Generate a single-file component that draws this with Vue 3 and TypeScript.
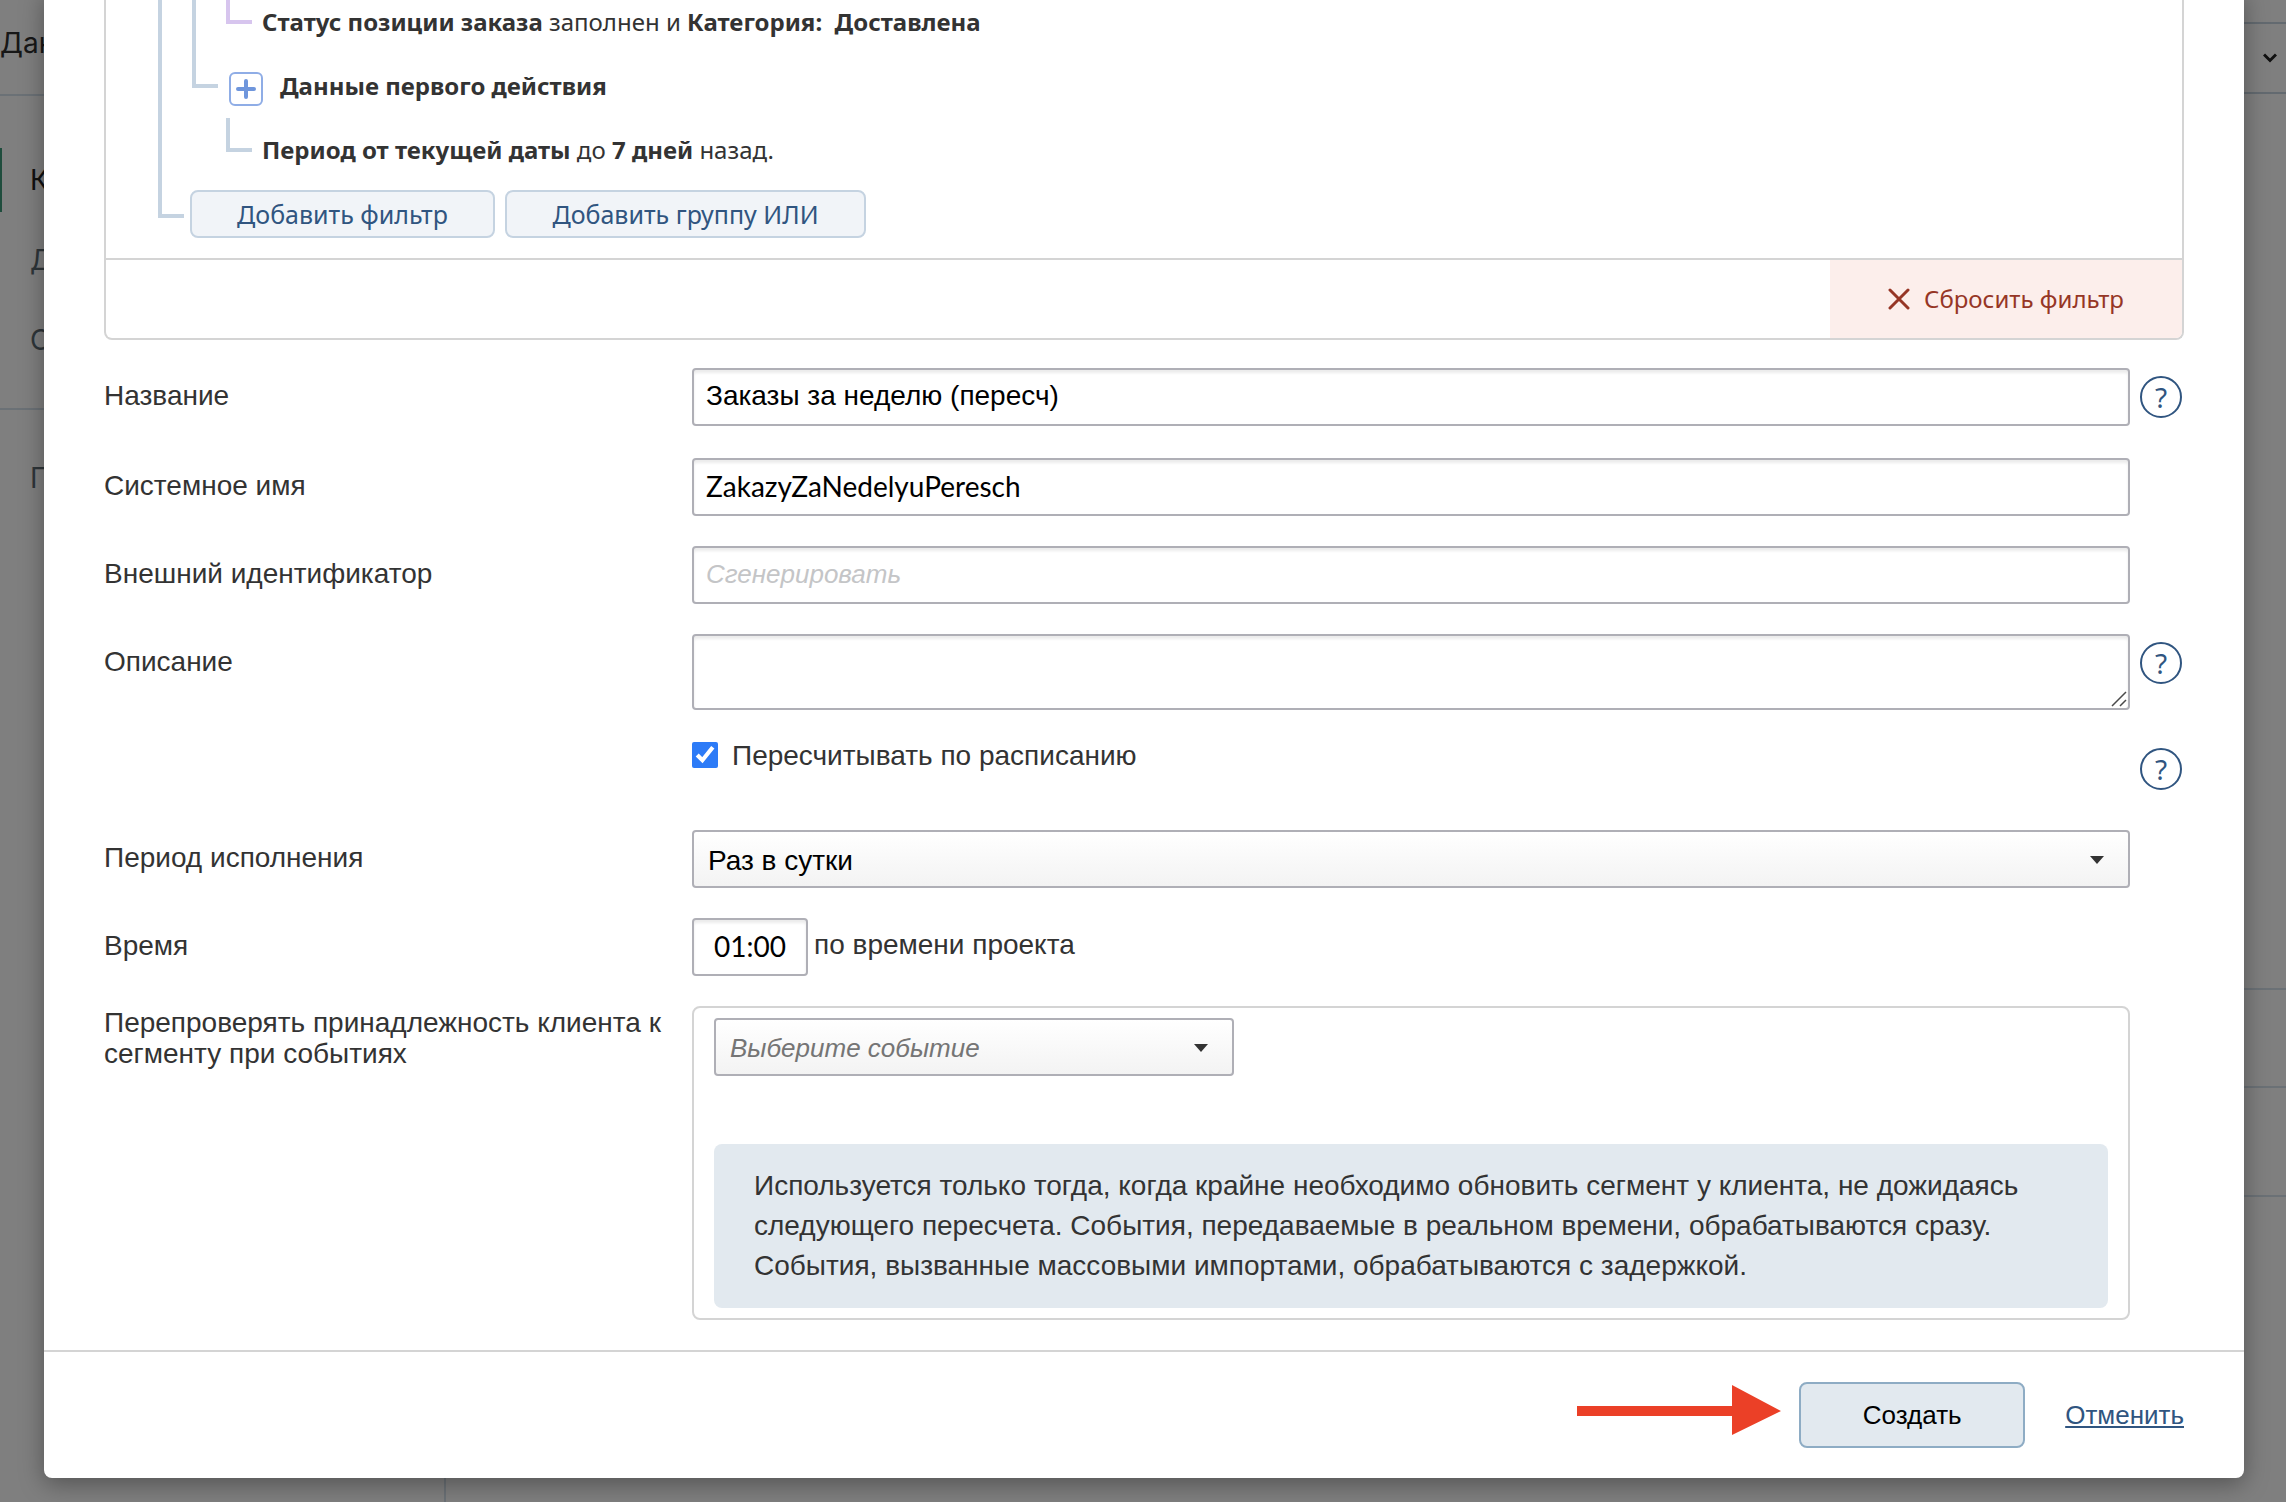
<script setup lang="ts">
import { ref } from 'vue'

interface NavItem {
  text: string
  active?: boolean
}

const nav: NavItem[] = [
  { text: 'К', active: true },
  { text: 'Д' },
  { text: 'С' },
]

const title = ref('Заказы за неделю (пересч)')
const systemName = ref('ZakazyZaNedelyuPeresch')
const externalId = ref('')
const description = ref('')
const scheduled = ref(true)
const period = ref('day')
const time = ref('01:00')
const event = ref('')
</script>

<template>
  <div class="screen">
    <div class="page">
      <aside class="side">
        <div class="side-title">Дан</div>
        <nav class="side-nav">
          <a
            v-for="item in nav"
            :key="item.text"
            href="#"
            class="side-link"
            :class="{ active: item.active }"
          >{{ item.text }}</a>
        </nav>
        <a href="#" class="side-link side-last">П</a>
      </aside>
      <div class="content">
        <div class="toolbar">
          <svg width="14" height="10" viewBox="0 0 14 10" fill="none" stroke="#222" stroke-width="3">
            <path d="M1 1.5 7 7.5 13 1.5" />
          </svg>
        </div>
        <div class="block block-tall"></div>
        <div class="block block-a"></div>
        <div class="block block-b"></div>
      </div>
    </div>

    <div class="overlay">
      <form class="modal" @submit.prevent>
        <section class="filter">
          <div class="tree">
            <div class="node">
              <span class="rail line"></span>
              <span class="rail line"></span>
              <span class="rail"><i class="corner violet"></i></span>
              <p class="cond"><b>Статус позиции заказа</b> заполнен и <b>Категория:&nbsp; Доставлена</b></p>
            </div>
            <div class="node">
              <span class="rail line"></span>
              <span class="rail"><i class="corner"></i></span>
              <button type="button" class="plus" aria-label="+">
                <svg width="20" height="20" viewBox="0 0 20 20" stroke="#6f96dc" stroke-width="4" stroke-linecap="round">
                  <path d="M10 2v16M2 10h16" />
                </svg>
              </button>
              <p class="cond"><b>Данные первого действия</b></p>
            </div>
            <div class="node">
              <span class="rail line"></span>
              <span class="rail"></span>
              <span class="rail"><i class="corner"></i></span>
              <p class="cond"><b>Период от текущей даты</b> до <b>7 дней</b> назад.</p>
            </div>
            <div class="node node-actions">
              <span class="rail"><i class="corner"></i></span>
              <div class="actions">
                <button type="button" class="add add-filter">Добавить фильтр</button>
                <button type="button" class="add add-group">Добавить группу ИЛИ</button>
              </div>
            </div>
          </div>
          <div class="filter-foot">
            <button type="button" class="reset">
              <svg width="22" height="22" viewBox="0 0 22 22" stroke="#963626" stroke-width="3" stroke-linecap="round">
                <path d="M2 2 20 20M20 2 2 20" />
              </svg>
              Сбросить фильтр
            </button>
          </div>
        </section>

        <div class="fields">
          <div class="row row-first">
            <label class="label" for="title">Название</label>
            <input id="title" v-model="title" class="input" type="text">
            <button type="button" class="help">?</button>
          </div>
          <div class="row">
            <label class="label" for="system">Системное имя</label>
            <input id="system" v-model="systemName" class="input latin" type="text">
          </div>
          <div class="row">
            <label class="label" for="external">Внешний идентификатор</label>
            <input id="external" v-model="externalId" class="input" type="text" placeholder="Сгенерировать">
          </div>
          <div class="row">
            <label class="label" for="description">Описание</label>
            <div class="area-wrap">
              <textarea id="description" v-model="description" class="input area"></textarea>
              <svg class="grip" width="16" height="16" viewBox="0 0 16 16" stroke="#4a4a4a" stroke-width="1.5">
                <path d="M1 15 15 1M9 15l6-6" />
              </svg>
            </div>
            <button type="button" class="help">?</button>
          </div>
          <div class="row row-check">
            <label class="check">
              <input v-model="scheduled" type="checkbox">
              Пересчитывать по расписанию
            </label>
            <button type="button" class="help">?</button>
          </div>
          <div class="row">
            <label class="label" for="period">Период исполнения</label>
            <div class="select">
              <select id="period" v-model="period">
                <option value="day">Раз в сутки</option>
              </select>
              <svg class="caret" width="14" height="8" viewBox="0 0 14 8" fill="#333"><path d="M0 0h14L7 8z" /></svg>
            </div>
          </div>
          <div class="row">
            <label class="label" for="time">Время</label>
            <div class="time">
              <input id="time" v-model="time" class="input latin time-input" type="text">
              <span>по времени проекта</span>
            </div>
          </div>
          <div class="row">
            <label class="label label-top" for="event">Перепроверять принадлежность клиента к сегменту при событиях</label>
            <div class="events">
              <div class="select select-event">
                <select id="event" v-model="event">
                  <option value="">Выберите событие</option>
                </select>
                <svg class="caret" width="14" height="8" viewBox="0 0 14 8" fill="#333"><path d="M0 0h14L7 8z" /></svg>
              </div>
              <p class="note">
                Используется только тогда, когда крайне необходимо обновить сегмент у клиента, не дожидаясь
                следующего пересчета. События, передаваемые в реальном времени, обрабатываются сразу.
                События, вызванные массовыми импортами, обрабатываются с задержкой.
              </p>
            </div>
          </div>
        </div>

        <footer class="foot">
          <svg class="arrow" width="204" height="66" viewBox="0 0 204 66" fill="#eb4027">
            <path d="M0 24H155V3L204 29 155 53V34H0z" />
          </svg>
          <button type="submit" class="submit">Создать</button>
          <a href="#" class="cancel">Отменить</a>
        </footer>
      </form>
    </div>
  </div>
</template>

<style>
body {
  margin: 0;
  background: #808080;
}
</style>

<style scoped>
* {
  box-sizing: border-box;
}

.screen {
  display: grid;
  overflow: hidden;
  font: 28px/31px "Liberation Sans", Arial, sans-serif;
  color: #333;
}

button,
input,
textarea,
select {
  margin: 0;
  font: inherit;
}

.page,
.overlay {
  grid-area: 1 / 1;
  min-width: 0;
}

/* page under the dialog */
.page {
  display: grid;
  grid-template-columns: 446px 1fr;
  background: #fff;
  font-family: Inter, sans-serif;
}

.side {
  border-right: 2px solid #d6e2ec;
}

.side-title {
  height: 96px;
  padding-top: 28px;
  border-bottom: 2px solid #d6e2ec;
  color: #2e2e2e;
}

.side-nav {
  display: grid;
  gap: 16px;
  padding: 52px 0 36px;
  border-bottom: 2px solid #d6e2ec;
}

.side-link {
  display: block;
  padding-left: 30px;
  line-height: 64px;
  color: #5d6b73;
  text-decoration: none;
}

.side-link.active {
  padding-left: 28px;
  border-left: 2px solid #3f9b7a;
  color: #222;
}

.side-last {
  margin-top: 36px;
}

.content {
  padding-top: 22px;
}

.toolbar {
  display: flex;
  align-items: center;
  justify-content: flex-end;
  height: 72px;
  padding-right: 9px;
  border: solid #c6d4e0;
  border-width: 2px 0;
}

.block {
  border-bottom: 2px solid #d6e2ec;
}

.block-tall {
  height: 896px;
}

.block-a {
  height: 98px;
}

.block-b {
  height: 109px;
}

/* dialog */
.overlay {
  padding: 0 42px 24px 44px;
  background: rgba(0, 0, 0, 0.5);
}

.modal {
  margin-top: -10px;
  border-radius: 0 0 8px 8px;
  background: #fff;
  box-shadow: 0 6px 24px rgba(0, 0, 0, 0.35);
}

.filter {
  margin: 0 60px;
  border: 2px solid #d4d4d4;
  border-top: 0;
  border-radius: 0 0 8px 8px;
  overflow: hidden;
  font: 24px/64px "Noto Sans", sans-serif;
}

.tree {
  padding-left: 52px;
  border-bottom: 2px solid #d4d4d4;
}

.node {
  display: flex;
  height: 64px;
}

.rail {
  width: 34px;
  flex: none;
}

.rail.line {
  border-left: 4px solid #c5d3e1;
}

.corner {
  display: block;
  width: 26px;
  height: 34px;
  border: solid #c5d3e1;
  border-width: 0 0 4px 4px;
}

.corner.violet {
  border-color: #d7c5ee;
}

.cond {
  margin: 0;
  padding-left: 2px;
  white-space: nowrap;
}

.plus {
  display: grid;
  place-items: center;
  width: 34px;
  height: 34px;
  margin: 18px 15px 0 3px;
  padding: 0;
  border: 2px solid #8fade6;
  border-radius: 6px;
  background: #fff;
}

.node-actions {
  height: 76px;
}

.node-actions .rail {
  width: 32px;
}

.node-actions .corner {
  height: 36px;
}

.actions {
  display: flex;
  gap: 10px;
  padding-top: 8px;
}

.add {
  height: 48px;
  padding: 0;
  border: 2px solid #c5d3e1;
  border-radius: 8px;
  background: #f1f4f8;
  color: #305580;
  font-size: 25px;
  line-height: 44px;
}

.add-filter {
  width: 305px;
}

.add-group {
  width: 361px;
}

.filter-foot {
  display: flex;
  justify-content: flex-end;
  height: 78px;
}

.reset {
  display: flex;
  align-items: center;
  justify-content: center;
  gap: 14px;
  width: 352px;
  padding: 0;
  border: 0;
  background: #fceeeb;
  color: #963626;
}

.fields {
  display: grid;
  gap: 30px;
  padding: 28px 60px 30px;
}

.row {
  display: grid;
  grid-template-columns: 588px 1fr 54px;
  align-items: start;
}

.row-first {
  margin-bottom: 2px;
}

.label {
  grid-column: 1;
  padding: 12px 20px 0 0;
}

.label-top {
  padding-top: 1px;
}

.input {
  display: block;
  width: 100%;
  height: 58px;
  padding: 0 12px 2px;
  border: 2px solid #afafb6;
  border-radius: 4px;
  outline: 0;
  background: #fff;
  box-shadow: inset 0 3px 3px rgba(0, 0, 0, 0.08);
  color: #000;
}

.input::placeholder {
  color: #c4c5c7;
  font-size: 26px;
  font-style: italic;
}

.latin {
  font-family: Lato, sans-serif;
}

.area-wrap {
  position: relative;
}

.area {
  height: 76px;
  resize: none;
}

.grip {
  position: absolute;
  right: 3px;
  bottom: 3px;
}

.help {
  grid-column: 3;
  width: 42px;
  height: 42px;
  margin: 8px 0 0 10px;
  padding: 0;
  border: 2px solid #305580;
  border-radius: 50%;
  background: none;
  color: #305580;
  font-family: "Noto Sans", sans-serif;
}

.row-check {
  min-height: 60px;
}

.check {
  grid-column: 2;
  display: flex;
  gap: 14px;
  padding-top: 2px;
  line-height: 28px;
}

.check input {
  width: 26px;
  height: 26px;
  accent-color: #2d7bf7;
}

.select {
  position: relative;
}

.select select {
  appearance: none;
  display: block;
  width: 100%;
  height: 58px;
  padding: 2px 14px 0;
  border: 2px solid #afafb6;
  border-radius: 4px;
  background: linear-gradient(#fff, #f3f3f3);
  color: #000;
}

.caret {
  position: absolute;
  top: 26px;
  right: 26px;
}

.time {
  display: flex;
  gap: 6px;
}

.time-input {
  width: 116px;
  text-align: center;
}

.time span {
  padding-top: 11px;
}

.events {
  display: grid;
  gap: 68px;
  padding: 10px 20px;
  border: 2px solid #d4d4d4;
  border-radius: 8px;
}

.select-event {
  width: 520px;
}

.select-event select {
  color: #757575;
  font-size: 26px;
  font-style: italic;
}

.note {
  margin: 0;
  padding: 22px 40px;
  border-radius: 8px;
  background: #e2e9ef;
  line-height: 40px;
}

.foot {
  display: flex;
  align-items: center;
  justify-content: flex-end;
  padding: 30px 60px;
  border-top: 2px solid #d4d4d4;
  font-size: 26px;
}

.arrow {
  margin-right: 18px;
}

.submit {
  width: 226px;
  height: 66px;
  padding: 0;
  border: 2px solid #8eacc4;
  border-radius: 8px;
  background: #e2e9ef;
  color: #000;
}

.cancel {
  margin-left: 40px;
  color: #305580;
}
</style>
